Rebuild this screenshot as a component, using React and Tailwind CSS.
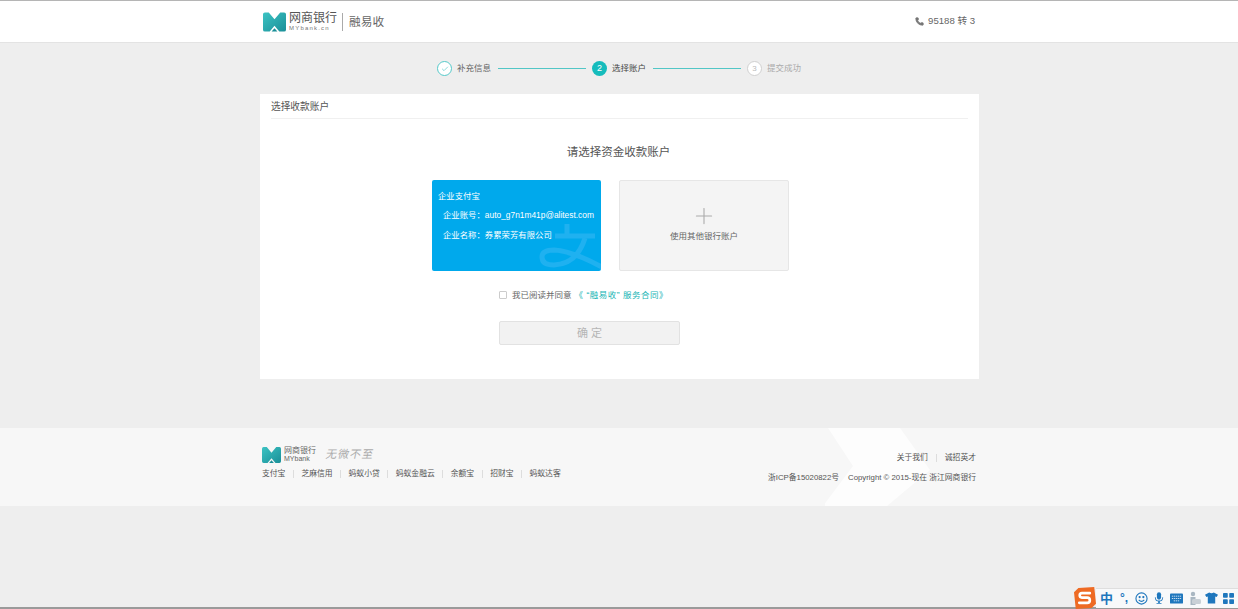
import { Phone, Check, Plus } from 'lucide-react'

const FONT = '[font-family:"Liberation_Sans","Noto_Sans_CJK_SC",sans-serif]'

const FOOTER_LINKS = ['支付宝', '芝麻信用', '蚂蚁小贷', '蚂蚁金融云', '余额宝', '招财宝', '蚂蚁达客']

function Logo({ className, id }) {
  return (
    <svg className={className} viewBox="0 0 24 20">
      <defs>
        <linearGradient id={id} x1="0" y1="0" x2="1" y2="1">
          <stop offset="0" stopColor="#3cc3c3" />
          <stop offset="1" stopColor="#1a8f98" />
        </linearGradient>
      </defs>
      <path d="M0 2 Q0 0 2 0 H6 L12 7 L18 0 H22 Q24 0 24 2 V18 Q24 20 22 20 H17 L12 14 L7 20 H2 Q0 20 0 18 Z" fill={`url(#${id})`} />
      <path d="M9 20 L12 16.5 L15 20 Z" fill="#1a8f98" />
    </svg>
  )
}

function Step({ state, label, number }) {
  return (
    <div className="flex items-center gap-[5px]">
      {state === 'done' && (
        <span className="flex h-[15px] w-[15px] items-center justify-center rounded-full border border-[#55c9c9] bg-white">
          <Check className="h-[8px] w-[8px] text-[#55c9c9]" strokeWidth={2} />
        </span>
      )}
      {state === 'active' && (
        <span className="flex h-[15px] w-[15px] items-center justify-center rounded-full bg-[#16bcbc] text-[9px] text-white">{number}</span>
      )}
      {state === 'todo' && (
        <span className="flex h-[15px] w-[15px] items-center justify-center rounded-full border border-[#d0d0d0] bg-white text-[8px] text-[#bbb]">{number}</span>
      )}
      <span className={`text-[8.5px] ${state === 'active' ? 'text-[#444]' : state === 'done' ? 'text-[#666]' : 'text-[#aaa]'}`}>{label}</span>
    </div>
  )
}

function ImeBar() {
  return (
    <div className="absolute right-0 bottom-[1px] flex h-[20px] w-[164px] items-center pl-[26px]">
      <div className="absolute inset-y-0 right-0 left-[22px] border-t border-[#dedede] bg-[#f8f9fa]" />
      <svg className="absolute top-[-1px] left-0 h-[22px] w-[22px]" viewBox="0 0 25 25">
        <path d="M5 1 L23 0 L25 19 L20 24 L2 25 L0 6 Z" fill="#ee6a23" />
        <path d="M18 7 H9 Q6.5 7 6.5 9.5 Q6.5 12 9 12 H15 Q18 12 18 15 Q18 18 15 18 H6" fill="none" stroke="#fff" strokeWidth="3" strokeLinecap="round" />
      </svg>
      <span className="relative w-[13px] text-[13px] leading-none font-bold text-[#1f77bd]">中</span>
      <span className="relative ml-[7px] w-[10px] text-[12px] leading-none font-bold text-[#1f77bd]">°,</span>
      <svg className="relative ml-[5px] h-[13px] w-[13px]" viewBox="0 0 14 14" fill="none" stroke="#1f77bd" strokeWidth="1.2">
        <circle cx="7" cy="7" r="6" />
        <circle cx="5" cy="5.5" r=".6" fill="#1f77bd" />
        <circle cx="9" cy="5.5" r=".6" fill="#1f77bd" />
        <path d="M4 8.5 Q7 11.5 10 8.5" />
      </svg>
      <svg className="relative ml-[6px] h-[14px] w-[10px]" viewBox="0 0 12 14" fill="#1f77bd">
        <rect x="3.5" y="0" width="5" height="9" rx="2.5" />
        <path d="M1 6 Q1 11 6 11 Q11 11 11 6 L10 6 Q10 10 6 10 Q2 10 2 6 Z M5 11 H7 V13 H9 V14 H3 V13 H5 Z" />
      </svg>
      <svg className="relative ml-[6px] h-[11px] w-[13px]" viewBox="0 0 14 11">
        <rect width="14" height="11" rx="1" fill="#1f77bd" />
        <path d="M2 3 H12 M2 5.5 H12 M4 8 H10" stroke="#cfe3f3" strokeWidth="1" strokeDasharray="1.5 .7" />
      </svg>
      <svg className="relative ml-[5px] h-[14px] w-[13px]" viewBox="0 0 13 14">
        <circle cx="5" cy="3" r="2.2" fill="#a9b7c2" />
        <rect x="2.5" y="6" width="5" height="8" fill="#a9b7c2" />
        <rect x="4" y="8" width="9" height="5" rx="1.5" fill="#c9d0d6" />
      </svg>
      <svg className="relative ml-[4px] h-[12px] w-[13px]" viewBox="0 0 14 12" fill="#1f77bd">
        <path d="M4.5 0 Q7 1.5 9.5 0 L14 2.5 L12.5 5 L11 4.5 V12 H3 V4.5 L1.5 5 L0 2.5 Z" />
      </svg>
      <svg className="relative ml-[5px] h-[11px] w-[11px]" viewBox="0 0 12 12" fill="#1f77bd">
        <rect width="5.2" height="5.2" rx=".8" />
        <rect x="6.8" width="5.2" height="5.2" rx=".8" />
        <rect y="6.8" width="5.2" height="5.2" rx=".8" />
        <rect x="6.8" y="6.8" width="5.2" height="5.2" rx=".8" />
      </svg>
    </div>
  )
}

export default function App() {
  return (
    <div className={`relative h-[609px] w-[1238px] overflow-hidden bg-[#eeeeee] ${FONT}`}>
      {/* Header */}
      <header className="h-[43px] border-t border-b border-t-[#b5b5b5] border-b-[#e3e3e3] bg-white">
        <div className="mx-auto flex h-full w-[714px] items-center justify-between pl-[1px] pr-[1px]">
          <div className="flex items-center">
            <Logo className="h-[20px] w-[23px]" id="headLogo" />
            <div className="ml-[3px] flex flex-col">
              <span className="text-[12px] leading-[13px] text-[#555]">网商银行</span>
              <span className="text-[6px] leading-[7px] tracking-[1.2px] text-[#777]">MYbank.cn</span>
            </div>
            <span className="ml-[5px] h-[18px] w-px bg-[#aaa]" />
            <span className="ml-[6px] text-[11.7px] text-[#666]">融易收</span>
          </div>
          <div className="flex items-center text-[9.6px] text-[#666]">
            <Phone className="h-[9px] w-[9px] fill-[#777] text-[#777]" />
            <span className="ml-[4px]">95188 转 3</span>
          </div>
        </div>
      </header>

      {/* Steps */}
      <div className="flex h-[51px] items-center pl-[437px]">
        <Step state="done" label="补充信息" />
        <div className="mr-[6px] ml-[7px] h-px w-[88px] bg-[#52c6c6]" />
        <Step state="active" label="选择账户" number="2" />
        <div className="mr-[6px] ml-[7px] h-px w-[88px] bg-[#52c6c6]" />
        <Step state="todo" label="提交成功" number="3" />
      </div>

      {/* Main card */}
      <main className="ml-[260px] h-[285px] w-[719px] bg-white px-[11px]">
        <div className="flex h-[25px] items-center border-b border-[#f0f0f0] pt-[2px] text-[9.7px] text-[#555]">选择收款账户</div>
        <h1 className="mt-[25px] pr-[2px] text-center text-[11.5px] leading-[16px] text-[#555]">请选择资金收款账户</h1>
        <div className="mt-[20px] flex gap-[18px] pl-[161px]">
          <div className="relative h-[91px] w-[169px] overflow-hidden rounded-[2px] bg-[#00a9ec] pt-[9px] pl-[6px] text-[8.4px] whitespace-nowrap text-white">
            <svg className="absolute inset-0 h-full w-full" viewBox="0 0 169 91" fill="none" stroke="#1fb1f0" strokeWidth="5">
              <path d="M135 44 V56 M123 56 H163" />
              <path d="M153 58 Q145 84 122 85 Q110 85 110 77 Q110 70 122 70 Q140 71 170 87" />
            </svg>
            <div className="relative leading-[14px]">企业支付宝</div>
            <div className="relative mt-[5px] pl-[5px] leading-[14px]">企业账号：auto_g7n1m41p@alitest.com</div>
            <div className="relative mt-[6px] pl-[5px] leading-[14px]">企业名称：券累荣芳有限公司</div>
          </div>
          <div className="flex h-[91px] w-[170px] flex-col items-center rounded-[2px] border border-[#e6e6e6] bg-[#f4f4f4] pt-[22px]">
            <Plus className="h-[26px] w-[26px] text-[#aaa]" strokeWidth={1} />
            <span className="mt-[1px] text-[8.5px] text-[#666]">使用其他银行账户</span>
          </div>
        </div>
        <div className="mt-[18px] flex items-center pl-[228px] text-[8.5px]">
          <span className="h-[8px] w-[8px] rounded-[1px] border border-[#ccc]" />
          <span className="ml-[5px] text-[#666]">我已阅读并同意</span>
          <span className="ml-[3px] tracking-[.5px] text-[#20b5b5]">《 “融易收” 服务合同》</span>
        </div>
        <div className="mt-[19px] ml-[228px] flex h-[24px] w-[181px] items-center justify-center rounded-[2px] border border-[#e2e2e2] bg-[#f2f2f2] text-[11px] text-[#b5b5b5]">确 定</div>
      </main>

      {/* Footer */}
      <footer className="relative mt-[49px] h-[78px] overflow-hidden bg-[#f7f7f7]">
        <svg className="absolute top-0 left-[825px] h-[78px] w-[120px]" viewBox="0 0 120 78">
          <path d="M3 0 H75 L105 42 L62 78 H-2 L28 38 Z" fill="#fdfdfd" />
        </svg>
        <div className="relative mx-auto h-full w-[714px]">
          <div className="flex items-center pt-[18px]">
            <Logo className="h-[16px] w-[19px]" id="footLogo" />
            <div className="ml-[3px] flex flex-col text-[#666]">
              <span className="text-[8px] leading-[9px]">网商银行</span>
              <span className="text-[7px] leading-[8px]">MYbank</span>
            </div>
            <span className="ml-[10px] -skew-x-12 text-[11px] tracking-[1px] text-[#aaa]">无微不至</span>
          </div>
          <div className="mt-[5px] flex items-center text-[7.8px] text-[#555]">
            {FOOTER_LINKS.map((link, i) => (
              <span key={link} className="flex items-center">
                {i > 0 && <span className="mx-[7.5px] h-[8px] w-px bg-[#ddd]" />}
                {link}
              </span>
            ))}
          </div>
          <div className="absolute top-[24px] right-0 flex flex-col items-end text-[7.8px] text-[#555]">
            <div className="flex items-center">
              关于我们<span className="mx-[8px] h-[8px] w-px bg-[#ddd]" />诚招英才
            </div>
            <div className="mt-[8px]">浙ICP备15020822号<span className="ml-[9px]">Copyright © 2015-现在 浙江网商银行</span></div>
          </div>
        </div>
      </footer>

      <div className="absolute inset-x-0 bottom-0 h-[2px] bg-[#9a9a9a]" />
      <ImeBar />
    </div>
  )
}
